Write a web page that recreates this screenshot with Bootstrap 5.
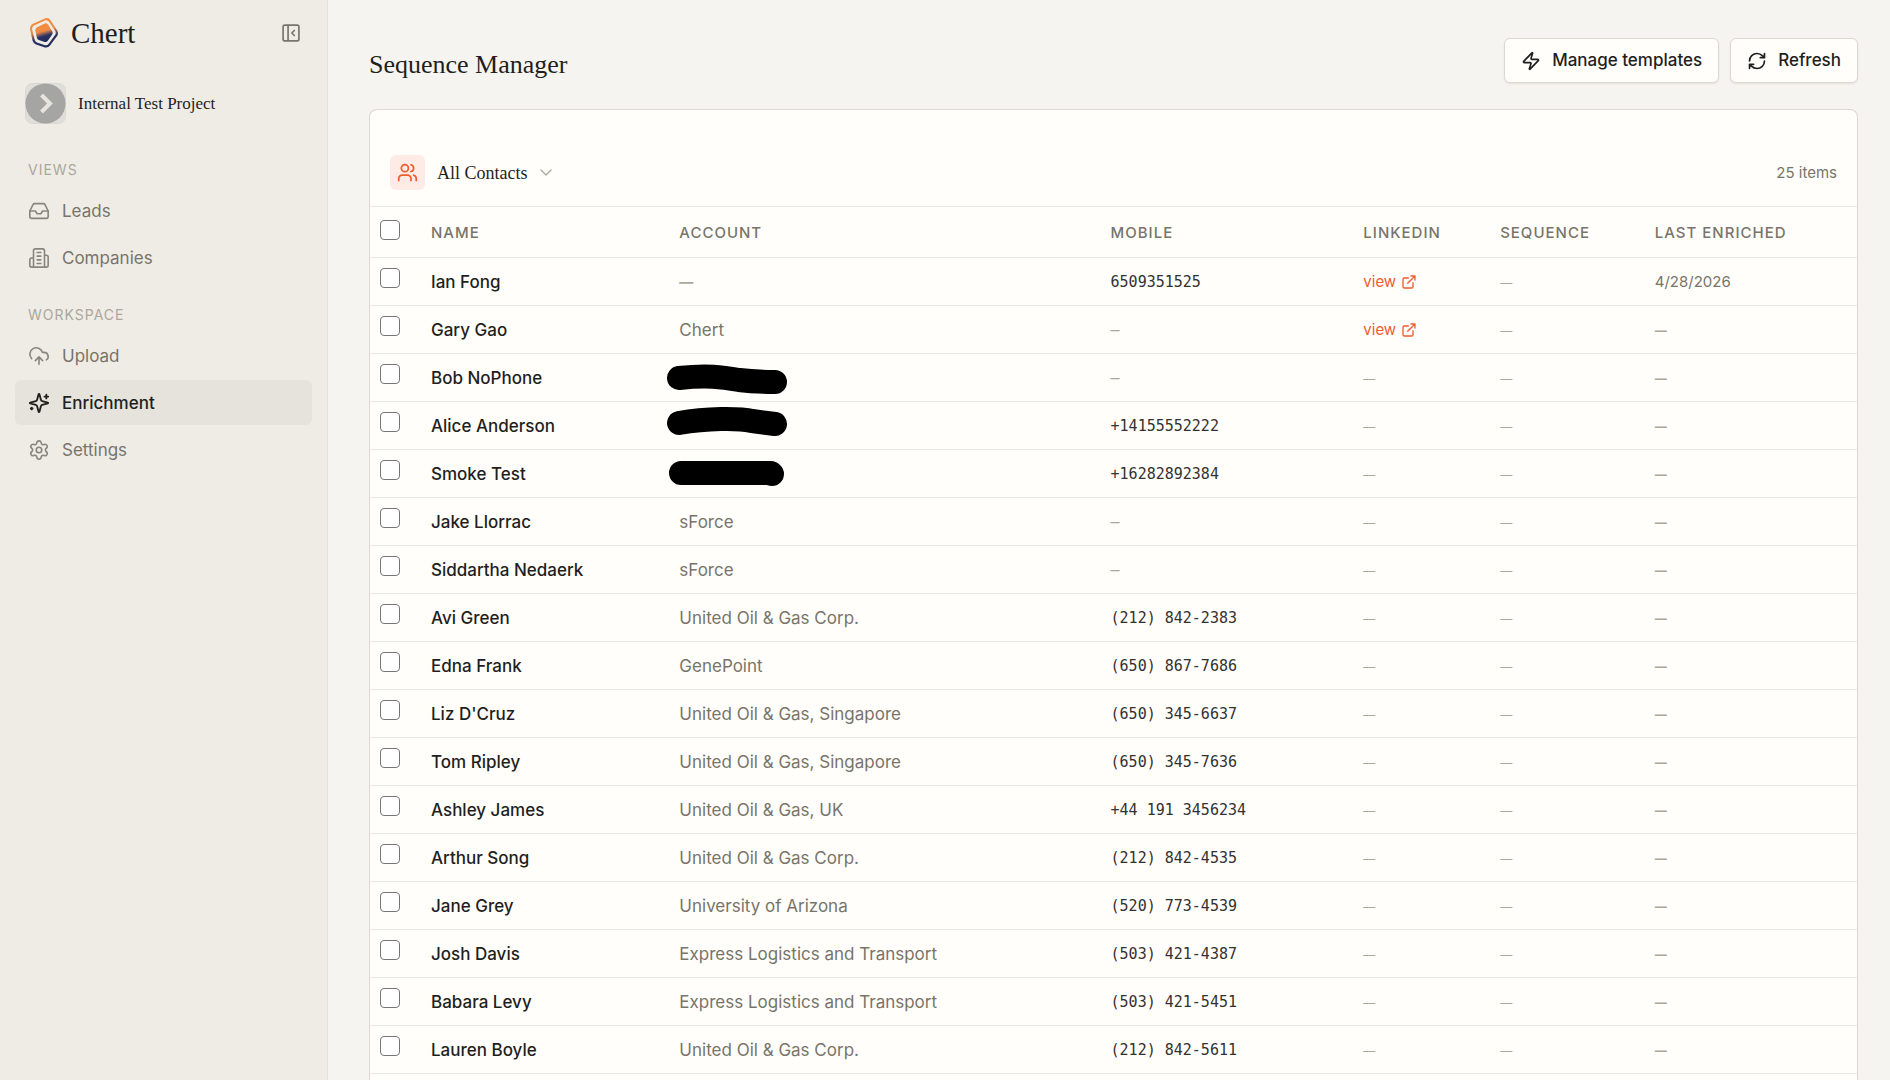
<!DOCTYPE html>
<html lang="en">
<head>
<meta charset="utf-8">
<meta name="viewport" content="width=device-width, initial-scale=1">
<title>Chert – Sequence Manager</title>
<link href="https://cdn.jsdelivr.net/npm/bootstrap@5.3.0/dist/css/bootstrap.min.css" rel="stylesheet">
<style>
  :root { --ink: #1f1f1d; --muted: #78746a; --faint: #aba79d; --line: #eae9e4; --edge: #dcd9d1; --paper: #fffefb; --accent: #ee5c30; }
  body { font-family: Inter, "Liberation Sans", sans-serif; font-size: 17px; line-height: 24px; color: var(--ink); background: #f6f4f0; }
  .app-shell { height: 100vh; }
  .serif { font-family: "Liberation Serif", serif; }
  svg.icn { fill: none; stroke: currentColor; stroke-width: 2; stroke-linecap: round; stroke-linejoin: round; flex: none; }
  .side { flex: 0 0 328px; background: #efece6; border-right: 1px solid #e4e1da; padding: 0 15px; }
  .side-top { height: 66px; padding: 0 11px 0 14px; }
  .brand { font-size: 29px; color: var(--ink); gap: 12px; }
  .bare { background: none; border: 0; padding: 0; color: var(--muted); line-height: 0; }
  .project { margin-top: 17px; padding-left: 10px; gap: 12px; font-size: 17px; background: none; border: 0; color: var(--ink); height: 41px; }
  .side-label { margin: 36px 0 8px; padding-left: 13px; font-size: 14px; line-height: 20px; letter-spacing: 1px; color: var(--faint); }
  .side-nav + .side-label { margin-top: 25px; }
  .side-nav { gap: 2px; }
  .side-nav .nav-link { height: 45px; padding: 0 13px; gap: 12px; color: var(--muted); border-radius: 6px; }
  .side-nav .nav-link svg { stroke-width: 1.75; opacity: .85; }
  .side-nav .nav-link.active { background: #e6e2dc; color: var(--ink); font-weight: 500; }
  .side-nav .nav-link.active svg { stroke-width: 2; opacity: 1; }
  .page { padding: 38px 32px 0 41px; }
  .page-title { font-size: 26px; line-height: 32px; padding-top: 8px; }
  .tool-set { gap: 11px; }
  .tool-btn { height: 45px; padding: 1px 16px 0; gap: 11px; font-size: 17px; font-weight: 500; background: var(--paper); border: 1px solid var(--edge); border-radius: 6px; color: var(--ink); box-shadow: 0 1px 2px rgba(60,50,30,.1); }
  .sheet { margin-top: 26px; background: var(--paper); border: 1px solid var(--edge); border-bottom: 0; border-radius: 8px 8px 0 0; }
  .sheet-top { padding: 45px 20px 16px; border-bottom: 1px solid var(--line); }
  .tile { width: 35px; height: 35px; border-radius: 6px; background: #feebe6; color: var(--accent); }
  .view-btn { background: none; border: 0; padding: 0; gap: 12px; font-size: 18px; color: var(--ink); }
  .view-btn .caret { stroke-width: 1.3; color: var(--faint); }
  .count { font-size: 15px; color: var(--muted); }
  .grid-table { table-layout: fixed; width: 100%; margin: 0; }
  .grid-table th, .grid-table td { padding: 0 12px; vertical-align: middle; border-bottom: 1px solid var(--line); white-space: nowrap; }
  .grid-table thead th { height: 50px; padding-top: 2px; font-size: 15px; font-weight: 500; letter-spacing: 1px; color: var(--muted); }
  .grid-table tbody tr { height: 48px; }
  .grid-table .pick { width: 49px; padding: 10px 0 0 10px; vertical-align: top; line-height: 0; }
  .grid-table thead th.pick { padding-top: 13px; }
  .pick input { appearance: none; width: 20px; height: 20px; margin: 0; background: #fff; border: 1px solid #767676; border-radius: 4px; }
  .pick input:checked { background: var(--accent); }
  .c-name { width: 16.7%; } .c-acct { width: 29%; } .c-mob { width: 17%; } .c-link { width: 9.2%; } .c-seq { width: 10.4%; }
  .grid-table td.who, .grid-table td.acct, .grid-table td.mob { padding-top: 1px; }
  td.who { font-weight: 500; }
  td.acct { color: var(--muted); }
  td.mob { font-family: "DejaVu Sans Mono", monospace; font-size: 15px; color: #33322f; }
  .grid-table td.tiny { font-size: 15px; color: var(--muted); padding-top: 2px; }
  td .none { color: var(--faint); }
  td.acct .none { font-size: 14px; font-weight: 700; }
  td.tiny .none { font-size: 12px; font-weight: 500; }
  td.tiny:last-child .none { font-weight: 700; }
  .grid-table td.inked { padding: 0; line-height: 0; }
  .inked path { fill: none; stroke: #000; stroke-width: 24; stroke-linecap: round; stroke-linejoin: round; }
  .view-link { color: var(--accent); gap: 5px; }
</style>
<script src="https://cdn.jsdelivr.net/npm/bootstrap@5.3.0/dist/js/bootstrap.bundle.min.js"></script>
</head>
<body>
<svg class="d-none">
  <symbol id="ext" viewBox="0 0 24 24"><path d="M15 3h6v6M10 14 21 3M18 13v6a2 2 0 0 1-2 2H5a2 2 0 0 1-2-2V8a2 2 0 0 1 2-2h6"/></symbol>
</svg>
<div class="app-shell d-flex overflow-hidden">
  <aside class="side d-flex flex-column">
    <div class="side-top d-flex align-items-center justify-content-between">
      <a href="#" class="brand serif d-flex align-items-center text-decoration-none">
        <svg width="30" height="32" viewBox="0 0 30 32" aria-hidden="true">
          <defs><linearGradient id="lg" x1=".35" y1="0" x2=".6" y2="1"><stop offset=".1" stop-color="#f58a3c"/><stop offset=".42" stop-color="#ee8a45"/><stop offset=".68" stop-color="#2a3263"/><stop offset="1" stop-color="#1f2a5c"/></linearGradient></defs>
          <path d="M4.500 6.500 16.500 1.200Q19.500.400 21.500 3.200L28.500 14Q29.700 16 28.500 18.500L21 28.500Q19 31 16 30.400L7 27.400Q4.200 26.400 3.500 23.500L1 12Q.700 8.500 4.500 6.500Z" fill="url(#lg)"/>
          <path d="M5.500 8.200 16.500 3.300Q18.700 2.800 20 4.800L26.500 14.500Q27.200 16 26.400 17.500L19.700 26.800Q18.200 28.800 16 28.200L8 25.500Q6.200 24.800 5.600 22.500L3.100 12.500Q2.800 9.600 5.500 8.200Z" fill="#efece6"/>
          <path d="M8.500 10 15.800 6.500Q17.800 5.800 19 7.500L23.400 14.500Q24 16 23.200 17.500L18.800 23.800Q17.500 25.500 15.700 25L9.800 23Q8.300 22.500 7.900 20.800L6.300 13.300Q6.100 11.200 8.500 10Z" fill="url(#lg)"/>
        </svg>
        <span>Chert</span>
      </a>
      <button class="bare" type="button" aria-label="Collapse sidebar">
        <svg class="icn" width="20" height="20" viewBox="0 0 24 24"><rect x="2.500" y="2.500" width="19" height="19" rx="2"/><path d="M8.500 3v18M16 9l-3 3 3 3"/></svg>
      </button>
    </div>
    <button class="project serif d-flex align-items-center" type="button">
      <svg width="41" height="41" viewBox="0 0 41 41" aria-hidden="true"><rect x=".5" y=".5" width="40" height="40" rx="7" fill="#e0ded9" stroke="#dad8d3"/><circle cx="20.500" cy="20.500" r="20" fill="#a5a5a3"/><path d="m16.500 12 8.500 8.500-8.500 8.500" fill="none" stroke="#e6e4df" stroke-width="4"/></svg>
      <span>Internal Test Project</span>
    </button>
    <div class="side-label">VIEWS</div>
    <nav class="side-nav nav flex-column">
      <a class="nav-link d-flex align-items-center" href="#"><svg class="icn" width="22" height="22" viewBox="0 0 24 24"><path d="M22 12h-6l-2 3h-4l-2-3H2"/><path d="M5.450 5.110 2 12v6a2 2 0 0 0 2 2h16a2 2 0 0 0 2-2v-6l-3.450-6.890A2 2 0 0 0 16.760 4H7.240a2 2 0 0 0-1.790 1.110z"/></svg>Leads</a>
      <a class="nav-link d-flex align-items-center" href="#"><svg class="icn" width="22" height="22" viewBox="0 0 24 24"><path d="M6 22V4a2 2 0 0 1 2-2h8a2 2 0 0 1 2 2v18ZM6 12H4a2 2 0 0 0-2 2v6a2 2 0 0 0 2 2h2M18 9h2a2 2 0 0 1 2 2v9a2 2 0 0 1-2 2h-2M10 6h4M10 10h4M10 14h4M10 18h4"/></svg>Companies</a>
    </nav>
    <div class="side-label">WORKSPACE</div>
    <nav class="side-nav nav flex-column">
      <a class="nav-link d-flex align-items-center" href="#"><svg class="icn" width="22" height="22" viewBox="0 0 24 24"><path d="M4 14.899A7 7 0 1 1 15.710 8h1.790a4.500 4.500 0 0 1 2.500 8.242M12 13v8M8 17l4-4 4 4"/></svg>Upload</a>
      <a class="nav-link active d-flex align-items-center" href="#" aria-current="page"><svg class="icn" width="22" height="22" viewBox="0 0 24 24"><path d="M9.937 15.500A2 2 0 0 0 8.500 14.063l-6.135-1.582a.5.5 0 0 1 0-.962L8.500 9.936A2 2 0 0 0 9.937 8.500l1.582-6.135a.5.5 0 0 1 .963 0L14.063 8.500A2 2 0 0 0 15.500 9.937l6.135 1.581a.5.5 0 0 1 0 .964L15.500 14.063a2 2 0 0 0-1.437 1.437l-1.582 6.135a.5.5 0 0 1-.963 0zM20 3v4M22 5h-4M4 17v2M5 18H3"/></svg>Enrichment</a>
      <a class="nav-link d-flex align-items-center" href="#"><svg class="icn" width="22" height="22" viewBox="0 0 24 24"><path d="M9.671 4.136a2.340 2.340 0 0 1 4.659 0 2.340 2.340 0 0 0 3.319 1.915 2.340 2.340 0 0 1 2.330 4.033 2.340 2.340 0 0 0 0 3.831 2.340 2.340 0 0 1-2.330 4.033 2.340 2.340 0 0 0-3.319 1.915 2.340 2.340 0 0 1-4.659 0 2.340 2.340 0 0 0-3.320-1.915 2.340 2.340 0 0 1-2.330-4.033 2.340 2.340 0 0 0 0-3.831A2.340 2.340 0 0 1 6.350 6.051a2.340 2.340 0 0 0 3.319-1.915"/><circle cx="12" cy="12" r="3"/></svg>Settings</a>
    </nav>
  </aside>

  <main class="page flex-grow-1 d-flex flex-column">
    <header class="d-flex align-items-center justify-content-between">
      <h1 class="page-title serif m-0 fw-normal">Sequence Manager</h1>
      <div class="tool-set d-flex">
        <button class="btn tool-btn d-flex align-items-center" type="button"><svg class="icn" width="20" height="20" viewBox="0 0 24 24"><path d="M4 14a1 1 0 0 1-.78-1.630l9.900-10.200a.5.5 0 0 1 .86.46l-1.920 6.020A1 1 0 0 0 13 10h7a1 1 0 0 1 .78 1.630l-9.900 10.200a.5.5 0 0 1-.86-.46l1.920-6.020A1 1 0 0 0 11 14z"/></svg>Manage templates</button>
        <button class="btn tool-btn d-flex align-items-center" type="button"><svg class="icn" width="20" height="20" viewBox="0 0 24 24"><path d="M3 12a9 9 0 0 1 9-9 9.750 9.750 0 0 1 6.740 2.740L21 8M21 3v5h-5M21 12a9 9 0 0 1-9 9 9.750 9.750 0 0 1-6.740-2.740L3 16M8 16H3v5"/></svg>Refresh</button>
      </div>
    </header>

    <section class="sheet flex-grow-1">
      <div class="sheet-top d-flex align-items-center justify-content-between">
        <button class="view-btn serif d-flex align-items-center" type="button">
          <span class="tile d-flex align-items-center justify-content-center"><svg class="icn" width="21" height="21" viewBox="0 0 24 24"><path d="M16 21v-2a4 4 0 0 0-4-4H6a4 4 0 0 0-4 4v2"/><circle cx="9" cy="7" r="4"/><path d="M22 21v-2a4 4 0 0 0-3-3.870M16 3.130a4 4 0 0 1 0 7.750"/></svg></span>
          <span>All Contacts</span>
          <svg class="icn caret" width="12" height="12" viewBox="0 0 12 12"><path d="m1 3 5 5 5-5"/></svg>
        </button>
        <span class="count">25 items</span>
      </div>
      <table class="grid-table">
        <thead>
          <tr><th class="pick"><input type="checkbox" aria-label="Select all"></th><th class="c-name">NAME</th><th class="c-acct">ACCOUNT</th><th class="c-mob">MOBILE</th><th class="c-link">LINKEDIN</th><th class="c-seq">SEQUENCE</th><th>LAST ENRICHED</th></tr>
        </thead>
        <tbody id="rows"></tbody>
      </table>
    </section>
  </main>
</div>
<script>
  // name, account, mobile, has LinkedIn, last enriched; an account that is an object is an inked-out stroke
  const people = [
    ["Ian Fong", "", "6509351525", true, "4/28/2026"],
    ["Gary Gao", "Chert", "", true],
    ["Bob NoPhone", {ink: "M12 24C40 21 55 23 72 26Q88 28 108 28"}, ""],
    ["Alice Anderson", {ink: "M12 21C40 16 72 16 85 19L108 22"}, "+14155552222"],
    ["Smoke Test", {ink: "M14 23H104L105 24"}, "+16282892384"],
    ["Jake Llorrac", "sForce", ""],
    ["Siddartha Nedaerk", "sForce", ""],
    ["Avi Green", "United Oil & Gas Corp.", "(212) 842-2383"],
    ["Edna Frank", "GenePoint", "(650) 867-7686"],
    ["Liz D'Cruz", "United Oil & Gas, Singapore", "(650) 345-6637"],
    ["Tom Ripley", "United Oil & Gas, Singapore", "(650) 345-7636"],
    ["Ashley James", "United Oil & Gas, UK", "+44 191 3456234"],
    ["Arthur Song", "United Oil & Gas Corp.", "(212) 842-4535"],
    ["Jane Grey", "University of Arizona", "(520) 773-4539"],
    ["Josh Davis", "Express Logistics and Transport", "(503) 421-4387"],
    ["Babara Levy", "Express Logistics and Transport", "(503) 421-5451"],
    ["Lauren Boyle", "United Oil & Gas Corp.", "(212) 842-5611"]
  ];
  const esc = s => s.replace(/&/g, "&amp;");
  const none = '<span class="none">—</span>';
  document.getElementById("rows").innerHTML = people.map(([name, acct, mob, linked, last]) => `<tr>
    <td class="pick"><input type="checkbox" aria-label="Select ${name}"></td>
    <td class="who">${name}</td>
    ${acct.ink ? `<td class="inked"><svg width="124" height="47" viewBox="0 0 124 47"><path d="${acct.ink}"/></svg></td>` : `<td class="acct">${acct ? esc(acct) : none}</td>`}
    <td class="mob">${mob || '<span class="none">–</span>'}</td>
    <td class="tiny">${linked ? '<a href="#" class="view-link d-inline-flex align-items-center text-decoration-none">view<svg class="icn" width="16" height="16"><use href="#ext"/></svg></a>' : none}</td>
    <td class="tiny">${none}</td>
    <td class="tiny">${last || none}</td></tr>`).join("");
</script>
</body>
</html>
